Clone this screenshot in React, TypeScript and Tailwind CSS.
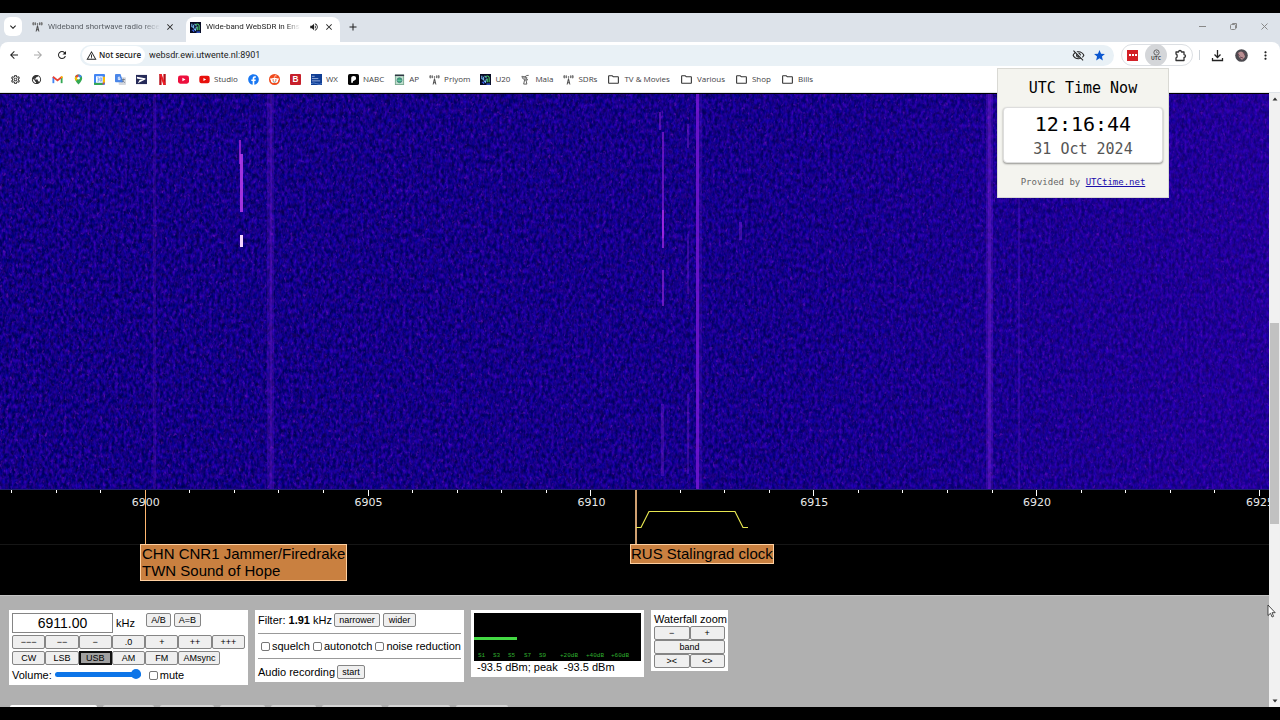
import type { ReactNode } from 'react';
import {
    MdAdd,
    MdArrowBack,
    MdArrowForward,
    MdClose,
    MdExpandMore,
    MdMoreVert,
    MdOutlineFolder,
    MdOutlineSettings,
    MdOutlineVisibilityOff,
    MdPublic,
    MdRefresh,
    MdStar,
    MdVolumeUp,
    MdWarningAmber,
} from 'react-icons/md';
import { FaFacebook, FaYoutube } from 'react-icons/fa';

type Bookmark = { label?: string; name: string; icon: ReactNode };

function AntennaIcon() {
    return (
        <svg viewBox="0 0 12 12" className="h-[11px] w-[11px] shrink-0" fill="none" stroke="#444" strokeWidth="1">
            <ellipse cx="1.500" cy="3" rx="1.200" ry="2" fill="#777" stroke="none" />
            <ellipse cx="10.500" cy="3" rx="1.200" ry="2" fill="#777" stroke="none" />
            <path d="M3.600 1.500v3M8.400 1.500v3" />
            <path d="M6 5L4.500 11.500M6 5L7.500 11.500M4.800 9.500h2.400M5.400 7.500h1.200" />
            <circle cx="6" cy="3.200" r=".8" fill="#444" stroke="none" />
        </svg>
    );
}

function SdrIcon() {
    return (
        <svg viewBox="0 0 12 12" className="h-[11px] w-[11px] shrink-0">
            <rect width="12" height="12" fill="#070b24" />
            <path d="M2 2v3l2 1V3M5 2l2 2M4 7l2 2 1-4" fill="none" stroke="#7ec6ff" strokeWidth="1.1" />
            <path d="M6 3q3-2 4 1v5M8 5v4" fill="none" stroke="#48c565" strokeWidth="1.2" />
            <path d="M2 9h2v2M7 11h4" fill="none" stroke="#3a62e8" strokeWidth="1.2" />
        </svg>
    );
}

function Glyph({ children }: { children: ReactNode }) {
    return (
        <svg viewBox="0 0 12 12" className="h-[11px] w-[11px] shrink-0">
            {children}
        </svg>
    );
}

const folder = <MdOutlineFolder className="h-[13px] w-[13px] shrink-0 text-[#333]" />;

const bookmarks: Bookmark[] = [
    { name: 'Settings', icon: <MdOutlineSettings className="h-[11px] w-[11px] text-[#333]" /> },
    { name: 'Web', icon: <MdPublic className="h-[11px] w-[11px] text-[#333]" /> },
    {
        name: 'Mail',
        icon: (
            <Glyph>
                <path d="M1.500 10V3.500" stroke="#4285f4" strokeWidth="2" />
                <path d="M10.500 10V3.500" stroke="#34a853" strokeWidth="2" />
                <path d="M1 3l5 4 5-4" fill="none" stroke="#ea4335" strokeWidth="2" />
                <path d="M10 4l1.500-1.200" stroke="#fbbc04" strokeWidth="2" />
            </Glyph>
        ),
    },
    {
        name: 'Maps',
        icon: (
            <Glyph>
                <path d="M6 .5A4 4 0 0 0 2 4.500Q2 7 6 11.500Q10 7 10 4.500A4 4 0 0 0 6 .5" fill="#34a853" />
                <path d="M6 .5A4 4 0 0 0 2.400 2.600L6 5Z" fill="#ea4335" />
                <path d="M6 .5A4 4 0 0 1 9.600 2.600L6 5Z" fill="#4285f4" />
                <path d="M2.400 2.600Q1.200 5 3.200 7.500L6 5Z" fill="#fbbc04" />
                <circle cx="6" cy="4.500" r="1.400" fill="#fff" />
            </Glyph>
        ),
    },
    {
        name: 'Calendar',
        icon: (
            <Glyph>
                <rect width="12" height="12" rx="1" fill="#4285f4" />
                <path d="M9.500 3H12v6.500H9.500z" fill="#fbbc04" />
                <path d="M0 9.500h9.500V12H1q-1 0-1-1z" fill="#34a853" />
                <path d="M9.500 9.500H12L9.500 12z" fill="#ea4335" />
                <rect x="2.200" y="2.500" width="7.300" height="7" fill="#fff" />
                <path d="M3.500 4.200h1.800v3.600H3.500M4 6h1.300M6.700 4.200h1.600v3.600H6.700z" fill="none" stroke="#4285f4" strokeWidth=".7" />
            </Glyph>
        ),
    },
    {
        name: 'Translate',
        icon: (
            <Glyph>
                <rect x="4" y="3.500" width="8" height="8.500" rx="1" fill="#d5d8de" />
                <path d="M1 0h5l3 9H1q-1 0-1-1V1q0-1 1-1" fill="#4a86e8" />
                <path d="M5.500 3.500H3.600v2.600h2v-1.300H4.600" fill="none" stroke="#fff" strokeWidth=".9" />
                <path d="M7.500 6h3.500M9.200 5v1q-.2 2.200-1.500 3M8.500 7.500l2.200 2" fill="none" stroke="#6b7280" strokeWidth=".8" />
            </Glyph>
        ),
    },
    {
        name: 'Post',
        icon: (
            <Glyph>
                <rect y="1" width="12" height="10" fill="#252a58" />
                <path d="M1 3l9 1.500q1 .5 0 1.500L2 10l2-3.500h4L1 5z" fill="#fff" />
            </Glyph>
        ),
    },
    {
        name: 'Films',
        icon: (
            <Glyph>
                <path d="M2.500 0h2.500v12H2.500zM7 0h2.500v12H7z" fill="#b80f18" />
                <path d="M2.500 0h2.500l4.500 12H7z" fill="#ee1c25" />
            </Glyph>
        ),
    },
    {
        name: 'Video',
        icon: (
            <Glyph>
                <rect y="1.500" width="12" height="9" rx="2.500" fill="#ed0f3d" />
                <path d="M4.800 4l3.400 2-3.400 2z" fill="#fff" />
            </Glyph>
        ),
    },
    { name: 'Studio', label: 'Studio', icon: <FaYoutube className="h-[11px] w-[11px] shrink-0 text-[#e8100c]" /> },
    { name: 'Facebook', icon: <FaFacebook className="h-[11px] w-[11px] text-[#1877f2]" /> },
    {
        name: 'Reddit',
        icon: (
            <Glyph>
                <circle cx="6" cy="6" r="6" fill="#f04a1c" />
                <ellipse cx="6" cy="7" rx="4" ry="2.900" fill="#fff" />
                <circle cx="2.200" cy="5.500" r="1" fill="#fff" />
                <circle cx="9.800" cy="5.500" r="1" fill="#fff" />
                <path d="M6 4l.6-2.200 1.800.4" fill="none" stroke="#fff" strokeWidth=".7" />
                <circle cx="4.500" cy="6.500" r=".8" fill="#f04a1c" />
                <circle cx="7.500" cy="6.500" r=".8" fill="#f04a1c" />
                <path d="M4.300 8.300q1.700 1.200 3.400 0" fill="none" stroke="#222" strokeWidth=".6" />
            </Glyph>
        ),
    },
    {
        name: 'B',
        icon: (
            <Glyph>
                <rect width="12" height="12" rx="1" fill="#c6202b" />
                <text x="6" y="9" textAnchor="middle" className="fill-white font-['Liberation_Sans'] text-[9px] font-bold">
                    B
                </text>
            </Glyph>
        ),
    },
    {
        name: 'WX',
        label: 'WX',
        icon: (
            <Glyph>
                <rect width="12" height="12" fill="#0f3d94" />
                <path d="M1 2.500h3M1 5h7M1 7.500h9" stroke="#c6d5f2" strokeWidth=".8" />
                <path d="M0 10.500q3-1.500 6 0t6 0" fill="none" stroke="#6d9be0" strokeWidth=".8" />
            </Glyph>
        ),
    },
    {
        name: 'NABC',
        label: 'NABC',
        icon: (
            <Glyph>
                <rect width="12" height="12" rx="2" fill="#050505" />
                <path d="M3.500 9.500V4q0-1.700 2.700-1.700T8.800 5q0 1.700-2 2.200T5.300 9.500z" fill="#fff" />
            </Glyph>
        ),
    },
    {
        name: 'AP',
        label: 'AP',
        icon: (
            <Glyph>
                <rect x="1.500" y="1" width="9" height="10.500" fill="#bfe0cc" stroke="#7aa890" />
                <path d="M1 1.500h10" stroke="#334" strokeWidth="1.500" />
                <circle cx="6" cy="6.800" r="2.700" fill="#3fa878" stroke="#367" strokeWidth=".7" />
                <path d="M3.500 7h5" stroke="#8dc" strokeWidth=".6" />
            </Glyph>
        ),
    },
    { name: 'Priyom', label: 'Priyom', icon: <AntennaIcon /> },
    { name: 'U20', label: 'U20', icon: <SdrIcon /> },
    {
        name: 'Mala',
        label: 'Mala',
        icon: (
            <Glyph>
                <path d="M2 2.500q1 5 6.500 4L5.500 3z" fill="#aaa" stroke="#555" strokeWidth=".8" />
                <path d="M5.500 3q1.500-2 4-1.500M8 4.500l-2-2M5 6.500L4 11h3.500L6.500 6.500" fill="none" stroke="#555" strokeWidth="1" />
            </Glyph>
        ),
    },
    { name: 'SDRs', label: 'SDRs', icon: <AntennaIcon /> },
    { name: 'TV & Movies', label: 'TV & Movies', icon: folder },
    { name: 'Various', label: 'Various', icon: folder },
    { name: 'Shop', label: 'Shop', icon: folder },
    { name: 'Bills', label: 'Bills', icon: folder },
];

function TabStrip() {
    return (
        <div className="flex h-[29px] items-stretch bg-[#dde3ea] font-['Roboto',sans-serif] text-[8px] text-[#1f1f1f]">
            <button aria-label="Search tabs" className="mt-1 ml-1 flex h-[19px] w-[18px] items-center justify-center rounded-md bg-white">
                <MdExpandMore className="h-3 w-3" />
            </button>
            <div className="ml-[10px] flex w-[154px] items-center gap-[5px] pr-[11px] pb-[2px] text-[#5b6066]">
                <AntennaIcon />
                <span className="mask-r-from-85% whitespace-nowrap">Wideband shortwave radio rece</span>
                <button aria-label="Close tab" className="ml-auto">
                    <MdClose className="h-[10px] w-[10px] text-[#222]" />
                </button>
            </div>
            <div className="mt-1 flex w-[154px] items-center gap-[5px] rounded-t-lg bg-white pr-[6px] pb-[5px] pl-[4px]">
                <SdrIcon />
                <span className="mask-r-from-85% whitespace-nowrap">Wide-band WebSDR in Ens</span>
                <MdVolumeUp className="ml-auto h-[10px] w-[10px] shrink-0" />
                <button aria-label="Close tab">
                    <MdClose className="h-[10px] w-[10px]" />
                </button>
            </div>
            <button aria-label="New tab" className="ml-[7px] pb-[2px]">
                <MdAdd className="h-3 w-3" />
            </button>
            <div className="ml-auto flex items-center gap-[22px] pr-[11px] pb-[2px]">
                <button aria-label="Minimize">
                    <svg viewBox="0 0 9 9" className="h-[9px] w-[9px]" stroke="#888" fill="none">
                        <path d="M1 4.500h7" />
                    </svg>
                </button>
                <button aria-label="Restore">
                    <svg viewBox="0 0 9 9" className="h-[9px] w-[9px]" stroke="#888" fill="none">
                        <rect x="1.500" y="2.500" width="5" height="5" rx="1" />
                        <path d="M3.500 2.500V1.500h4v4.500h-1" />
                    </svg>
                </button>
                <button aria-label="Close">
                    <svg viewBox="0 0 9 9" className="h-[9px] w-[9px]" stroke="#888" fill="none">
                        <path d="M1.500 1.500l6 6M7.500 1.500l-6 6" />
                    </svg>
                </button>
            </div>
        </div>
    );
}

function Toolbar() {
    return (
        <div className="bg-[#dde3ea]">
            <div className="flex h-[26px] items-center rounded-t-lg bg-white px-2 text-[#222]">
                <div className="flex items-center gap-3">
                    <button aria-label="Back">
                        <MdArrowBack className="h-3 w-3" />
                    </button>
                    <button aria-label="Forward">
                        <MdArrowForward className="h-3 w-3 text-[#aaa]" />
                    </button>
                    <button aria-label="Reload">
                        <MdRefresh className="h-3 w-3" />
                    </button>
                </div>
                <div className="ml-3 flex h-[21px] flex-1 items-center rounded-full bg-[#e9f1f6] pr-2 pl-[2px]">
                    <button className="flex h-[18px] shrink-0 items-center gap-[2px] rounded-full bg-white px-1 text-[8px] font-semibold whitespace-nowrap">
                        <MdWarningAmber className="h-[11px] w-[11px]" />
                        Not secure
                    </button>
                    <input
                        aria-label="Address"
                        className="ml-1 h-[18px] flex-1 bg-transparent font-['Roboto',sans-serif] text-[9px] outline-none"
                        defaultValue="websdr.ewi.utwente.nl:8901"
                    />
                    <button aria-label="Third-party cookies">
                        <MdOutlineVisibilityOff className="h-[13px] w-[13px]" />
                    </button>
                    <button aria-label="Bookmark" className="ml-2">
                        <MdStar className="h-[13px] w-[13px] text-[#0b57d0]" />
                    </button>
                </div>
                <div className="ml-[7px] flex h-[22px] items-center rounded-full border border-[#dcdfe3] px-[5px]">
                    <button aria-label="Blocker" className="flex h-[11px] w-[11px] items-center justify-center gap-px bg-[#d32127]">
                        <i className="h-[2px] w-[2px] bg-white" />
                        <i className="h-[2px] w-[2px] bg-white" />
                        <i className="h-[2px] w-[2px] bg-white" />
                    </button>
                    <button className="ml-[7px] flex h-[22px] w-[22px] flex-col items-center justify-center rounded-full bg-[#d4d6d9] text-[5px] leading-[5px] font-bold text-[#444]">
                        <svg viewBox="0 0 8 8" className="h-[7px] w-[7px]" fill="none" stroke="#555">
                            <circle cx="4" cy="4" r="3" />
                            <path d="M4 2.500V4h1.500" strokeWidth=".7" />
                        </svg>
                        UTC
                    </button>
                    <button aria-label="Extensions" className="ml-[7px]">
                        <svg viewBox="0 0 13 13" className="h-[13px] w-[13px]" fill="none" stroke="#333" strokeWidth="1.300" strokeLinejoin="round">
                            <path d="M2 3h2.500q.2-1.500 1.500-1.500T7.500 3H10v2.500q1.500.2 1.500 1.500T10 8.500V11.500H2V9q1.200-.3 1.200-2T2 5z" />
                        </svg>
                    </button>
                </div>
                <span className="ml-[6px] h-[10px] w-px bg-[#cdd3d9]" />
                <button aria-label="Downloads" className="ml-[11px]">
                    <svg viewBox="0 0 13 13" className="h-[13px] w-[13px]" fill="none" stroke="#222" strokeWidth="1.300">
                        <path d="M6.500 1v7.500M3.500 5.500l3 3 3-3M1.500 9v2.500h10V9" />
                    </svg>
                </button>
                <button aria-label="Profile" className="ml-[11px]">
                    <svg viewBox="0 0 13 13" className="h-[13px] w-[13px]">
                        <circle cx="6.500" cy="6.500" r="6.300" fill="#4c4a50" />
                        <path d="M3 4q3-3 6 0l1 4-3 3-3-3z" fill="#b98f92" />
                        <path d="M2.500 4l2 3M8 3l2 3M5 8l3 1" stroke="#6d4553" />
                    </svg>
                </button>
                <button aria-label="Menu" className="ml-[11px]">
                    <MdMoreVert className="h-[13px] w-[13px]" />
                </button>
            </div>
        </div>
    );
}

function BookmarksBar() {
    return (
        <nav className="flex h-[25px] items-center gap-[10px] border-b border-[#dfe3e8] bg-white pr-2 pb-[2px] pl-[10px] text-[8px] text-[#3f4245]">
            {bookmarks.map((item) => (
                <a key={item.name} href="#" aria-label={item.name} className="flex items-center gap-1 whitespace-nowrap">
                    {item.icon}
                    {item.label}
                </a>
            ))}
        </nav>
    );
}

function UtcPopup() {
    return (
        <aside className="absolute top-[68px] right-[111px] z-10 w-[172px] border border-[#d9d9d4] bg-[#f4f4ef] px-[5px] pt-2 pb-[9px] text-center font-['DejaVu_Sans_Mono',monospace] text-black">
            <h1 className="text-[15px] leading-[22px]">UTC Time Now</h1>
            <div className="mt-2 rounded-[4px] border border-[#ddd] bg-white pt-1 pb-px shadow-[0_1px_2px_rgba(0,0,0,0.4)]">
                <p className="text-[20px] leading-6">12:16:44</p>
                <p className="mt-px text-[15px] leading-6 text-[#555]">31 Oct 2024</p>
            </div>
            <p className="mt-[13px] text-[9px] leading-3 text-[#666]">
                Provided by{' '}
                <a href="#" className="text-[#1a0dab] underline">UTCtime.net</a>
            </p>
        </aside>
    );
}

type Trace = { x: number; y: number; h: number; w: number; color: string; opacity: number };

const traces: Trace[] = [
    { x: 153, y: 0, h: 395, w: 3, color: '#7a18c8', opacity: 0.22 },
    { x: 267, y: 0, h: 395, w: 7, color: '#6a18d0', opacity: 0.25 },
    { x: 270, y: 0, h: 395, w: 2, color: '#8a20d8', opacity: 0.2 },
    { x: 239, y: 46, h: 24, w: 2, color: '#a028d8', opacity: 0.8 },
    { x: 240, y: 60, h: 58, w: 3, color: '#b038e8', opacity: 0.9 },
    { x: 240, y: 141, h: 12, w: 3, color: '#f4d4ff', opacity: 1 },
    { x: 659, y: 18, h: 18, w: 2, color: '#8a20d8', opacity: 0.5 },
    { x: 662, y: 38, h: 106, w: 2, color: '#9420e0', opacity: 0.6 },
    { x: 662, y: 116, h: 38, w: 2, color: '#c030f0', opacity: 0.6 },
    { x: 662, y: 176, h: 36, w: 2, color: '#a028e0', opacity: 0.6 },
    { x: 661, y: 310, h: 72, w: 3, color: '#8020d8', opacity: 0.35 },
    { x: 687, y: 30, h: 24, w: 2, color: '#8020d8', opacity: 0.4 },
    { x: 687, y: 140, h: 60, w: 2, color: '#8020d8', opacity: 0.3 },
    { x: 687, y: 300, h: 80, w: 2, color: '#8020d8', opacity: 0.3 },
    { x: 696, y: 0, h: 395, w: 3, color: '#7a18d8', opacity: 0.8 },
    { x: 699, y: 0, h: 395, w: 3, color: '#5010c0', opacity: 0.3 },
    { x: 739, y: 128, h: 18, w: 3, color: '#8020d8', opacity: 0.4 },
    { x: 986, y: 0, h: 395, w: 7, color: '#8020e0', opacity: 0.25 },
    { x: 988, y: 0, h: 395, w: 3, color: '#8a28e0', opacity: 0.25 },
    { x: 1018, y: 100, h: 295, w: 2, color: '#6018d0', opacity: 0.3 },
];

function Waterfall() {
    return (
        <div className="relative min-h-0 flex-1 overflow-hidden border-t border-black bg-[#12008c]">
            <svg className="absolute inset-0 h-full w-full">
                <defs>
                    <filter id="noise" x="0" y="0" width="100%" height="100%" colorInterpolationFilters="sRGB">
                        <feTurbulence type="fractalNoise" baseFrequency="0.33 0.2" numOctaves="2" seed="7" />
                        <feColorMatrix values="0.3 0.3 0 0 -0.23  0 0 0 0 0  0.1 0.6 0 0 0.17  0 0 0 0 1" />
                    </filter>
                    <filter id="specks" x="0" y="0" width="100%" height="100%" colorInterpolationFilters="sRGB">
                        <feTurbulence type="fractalNoise" baseFrequency="0.31 0.23" numOctaves="2" seed="21" />
                        <feColorMatrix values="0 0 0 0 0.42  0 0 0 0 0.06  0 0 0 0 0.72  3 0 0 0 -1.9" />
                    </filter>
                    <filter id="holes" x="0" y="0" width="100%" height="100%" colorInterpolationFilters="sRGB">
                        <feTurbulence type="fractalNoise" baseFrequency="0.2 0.18" numOctaves="2" seed="4" />
                        <feColorMatrix values="0 0 0 0 0.02  0 0 0 0 0  0 0 0 0 0.25  0 3 0 0 -1.85" />
                    </filter>
                    <linearGradient id="glow">
                        <stop offset="0" stopColor="#2a00b0" stopOpacity="0" />
                        <stop offset="0.6" stopColor="#2a00b8" stopOpacity="0.1" />
                        <stop offset="1" stopColor="#4400c8" stopOpacity="0.3" />
                    </linearGradient>
                </defs>
                <rect width="100%" height="100%" filter="url(#noise)" />
                <rect width="100%" height="100%" filter="url(#holes)" />
                <rect width="100%" height="100%" filter="url(#specks)" />
                <rect width="100%" height="100%" fill="url(#glow)" />
                {traces.map((t, i) => (
                    <rect key={i} x={t.x} y={t.y} width={t.w} height={t.h} fill={t.color} opacity={t.opacity} />
                ))}
            </svg>
        </div>
    );
}

const ticks = Array.from({ length: 29 }, (_, i) => ({ khz: 6897 + i, x: 12 + i * 44.57 }));

function FrequencyScale() {
    return (
        <div className="relative h-[106px] shrink-0 overflow-hidden border-t border-[#20206a] bg-black font-['Liberation_Sans',sans-serif] text-[15px] leading-[17px] text-black">
            <svg className="absolute inset-0 h-full w-full">
                {ticks.map(({ khz, x }) => (
                    <g key={khz}>
                        <rect x={Math.round(x) - 1} y="0" width="1" height={khz % 5 === 0 ? 6 : 3} fill="#fff" />
                        {khz % 5 === 0 && (
                            <text x={x} y="16" textAnchor="middle" className="fill-[#e8e8e8] font-['DejaVu_Sans',sans-serif] text-[11px]">
                                {khz}
                            </text>
                        )}
                    </g>
                ))}
                <path d="M0 54.500H1280" stroke="#161616" />
                <rect x="145" y="0" width="1" height="55" fill="#ffb870" />
                <rect x="635" y="0" width="2" height="55" fill="#cfa070" />
                <path d="M636 37.500h5L649 21.500h86l8 16h5" fill="none" stroke="#e6e650" strokeWidth="1.200" />
            </svg>
            <a href="#" className="absolute top-[54px] left-[140px] border border-[#ffd0a0] bg-[#c98040] px-px pb-px whitespace-nowrap">
                CHN CNR1 Jammer/Firedrake
                <br />
                TWN Sound of Hope
            </a>
            <a href="#" className="absolute top-[54px] left-[630px] border border-[#ffd0a0] bg-[#c98040] pb-px whitespace-nowrap">
                RUS Stalingrad clock
            </a>
        </div>
    );
}

function Button({ children, className = '' }: { children: ReactNode; className?: string }) {
    return (
        <button className={`h-[14px] rounded-[2px] border border-[#858585] bg-[#efefef] text-[9px] leading-3 ${className}`}>
            {children}
        </button>
    );
}

function Check({ label }: { label: string }) {
    return (
        <label className="flex items-center gap-[2px]">
            <input type="checkbox" className="h-[9px] w-[9px] appearance-none rounded-[2px] border border-[#767676] bg-white" />
            {label}
        </label>
    );
}

function TuningPanel() {
    return (
        <section className="w-[239px] bg-white p-[3px]">
            <div className="flex">
                <input
                    aria-label="Frequency"
                    className="h-[20px] w-[101px] border border-[#858585] text-center text-[14px] outline-none"
                    defaultValue="6911.00"
                />
                <span className="mt-1 ml-[3px]">kHz</span>
                <Button className="ml-[11px] w-[25px]">A/B</Button>
                <Button className="ml-[3px] w-[27px]">A=B</Button>
            </div>
            <div className="mt-[2px] grid grid-cols-7">
                {['---', '--', '-', '.0', '+', '++', '+++'].map((step) => (
                    <Button key={step}>{step.replace(/-/g, '−')}</Button>
                ))}
            </div>
            <div className="mt-[2px] grid grid-cols-7">
                <Button>CW</Button>
                <Button>LSB</Button>
                <button className="h-[14px] border-2 border-[#111] bg-[#a0a0a0] text-[9px] leading-[10px]">USB</button>
                <Button>AM</Button>
                <Button>FM</Button>
                <Button className="w-[42px]">AMsync</Button>
            </div>
            <div className="mt-1 flex h-[13px] items-center">
                <label htmlFor="volume">Volume:</label>
                <input
                    id="volume"
                    type="range"
                    defaultValue="100"
                    className="mr-2 mb-[3px] ml-[3px] h-[5px] w-[86px] appearance-none rounded-full bg-[#0d75e8] [&::-webkit-slider-thumb]:h-[10px] [&::-webkit-slider-thumb]:w-[10px] [&::-webkit-slider-thumb]:appearance-none [&::-webkit-slider-thumb]:rounded-full [&::-webkit-slider-thumb]:bg-[#0d75e8]"
                />
                <Check label="mute" />
            </div>
        </section>
    );
}

function FilterPanel() {
    return (
        <section className="w-[209px] bg-white p-[3px]">
            <div className="flex items-center">
                <span className="mr-[2px]">
                    Filter: <b>1.91</b> kHz
                </span>
                <Button className="w-[46px]">narrower</Button>
                <Button className="ml-[3px] w-[33px]">wider</Button>
            </div>
            <hr className="mt-[6px] border-[#999]" />
            <div className="flex h-[24px] items-center justify-between pl-[3px]">
                <Check label="squelch" />
                <Check label="autonotch" />
                <Check label="noise reduction" />
            </div>
            <hr className="border-[#999]" />
            <div className="mt-[6px] flex items-center">
                <span className="mr-[2px]">Audio recording</span>
                <Button className="w-[28px]">start</Button>
            </div>
        </section>
    );
}

const meterMarks = [
    { x: 4, label: 'S1' },
    { x: 19, label: 'S3' },
    { x: 34, label: 'S5' },
    { x: 50, label: 'S7' },
    { x: 65, label: 'S9' },
    { x: 86, label: '+20dB' },
    { x: 112, label: '+40dB' },
    { x: 137, label: '+60dB' },
];

function SignalMeter() {
    return (
        <section className="w-[173px] bg-white p-[3px]">
            <svg className="block h-12 w-full bg-black">
                <rect y="24" width="43" height="3" fill="#44d944" />
                {meterMarks.map((mark) => (
                    <text
                        key={mark.label}
                        x={mark.x}
                        y="44"
                        className="fill-[#2fae2f] font-['Liberation_Mono',monospace] text-[6px]"
                    >
                        {mark.label}
                    </text>
                ))}
            </svg>
            <p className="pl-[3px] whitespace-pre">-93.5 dBm; peak  -93.5 dBm</p>
        </section>
    );
}

function ZoomPanel() {
    return (
        <section className="w-[77px] bg-white p-[3px] whitespace-nowrap">
            <h2 className="leading-[13px]">Waterfall zoom</h2>
            <div className="grid grid-cols-2">
                <Button>−</Button>
                <Button>+</Button>
                <Button className="col-span-2">band</Button>
                <Button>&gt;&lt;</Button>
                <Button>&lt;&gt;</Button>
            </div>
        </section>
    );
}

function Receiver() {
    return (
        <div className="flex h-28 shrink-0 flex-col overflow-hidden border-t border-[#c4c4c4] bg-[#b0b0b0] font-['Liberation_Sans',sans-serif] text-[11px] leading-[13px] text-black">
            <div className="flex items-start gap-[7px] pt-[14px] pl-[9px]">
                <TuningPanel />
                <FilterPanel />
                <SignalMeter />
                <ZoomPanel />
            </div>
            <div aria-hidden="true" className="mt-auto flex h-[2px] gap-[6px] pl-[10px]">
                <i className="w-[87px] rounded-t-[2px] bg-white" />
                <i className="w-[51px] rounded-t-[2px] bg-[#d4d4d4]" />
                <i className="w-[54px] rounded-t-[2px] bg-[#d4d4d4]" />
                <i className="w-[45px] rounded-t-[2px] bg-[#d4d4d4]" />
                <i className="w-[45px] rounded-t-[2px] bg-[#d4d4d4]" />
                <i className="w-[60px] rounded-t-[2px] bg-[#d4d4d4]" />
                <i className="w-[62px] rounded-t-[2px] bg-[#d4d4d4]" />
                <i className="w-[52px] rounded-t-[2px] bg-[#d4d4d4]" />
            </div>
        </div>
    );
}

function Scrollbar() {
    return (
        <div className="flex w-[11px] shrink-0 flex-col items-center bg-[#f1f1f1] py-1">
            <svg viewBox="0 0 6 4" className="h-1 w-[6px]" fill="#333">
                <path d="M3 .5L5.500 3.500H.5z" />
            </svg>
            <div className="flex w-full flex-1 flex-col">
                <span className="flex-[222]" />
                <span className="mx-px flex-[200] bg-[#c1c1c1]" />
                <span className="flex-[175]" />
            </div>
            <svg viewBox="0 0 6 4" className="h-1 w-[6px]" fill="#333">
                <path d="M3 3.500L5.500 .5H.5z" />
            </svg>
        </div>
    );
}

export default function App() {
    return (
        <div className="relative flex h-screen flex-col overflow-hidden bg-black py-[13px] font-['Open_Sans',sans-serif]">
            <TabStrip />
            <Toolbar />
            <BookmarksBar />
            <UtcPopup />
            <main className="flex min-h-0 flex-1">
                <div className="flex min-w-0 flex-1 flex-col">
                    <Waterfall />
                    <FrequencyScale />
                    <Receiver />
                </div>
                <Scrollbar />
            </main>
            <svg viewBox="0 0 9 14" className="absolute right-1 bottom-[102px] h-[14px] w-[9px]">
                <path d="M1 1v10.500l2.500-2.200 1.600 3.700 1.500-.7L5 8.700h3.200z" fill="#fff" stroke="#222" strokeWidth=".8" />
            </svg>
        </div>
    );
}
